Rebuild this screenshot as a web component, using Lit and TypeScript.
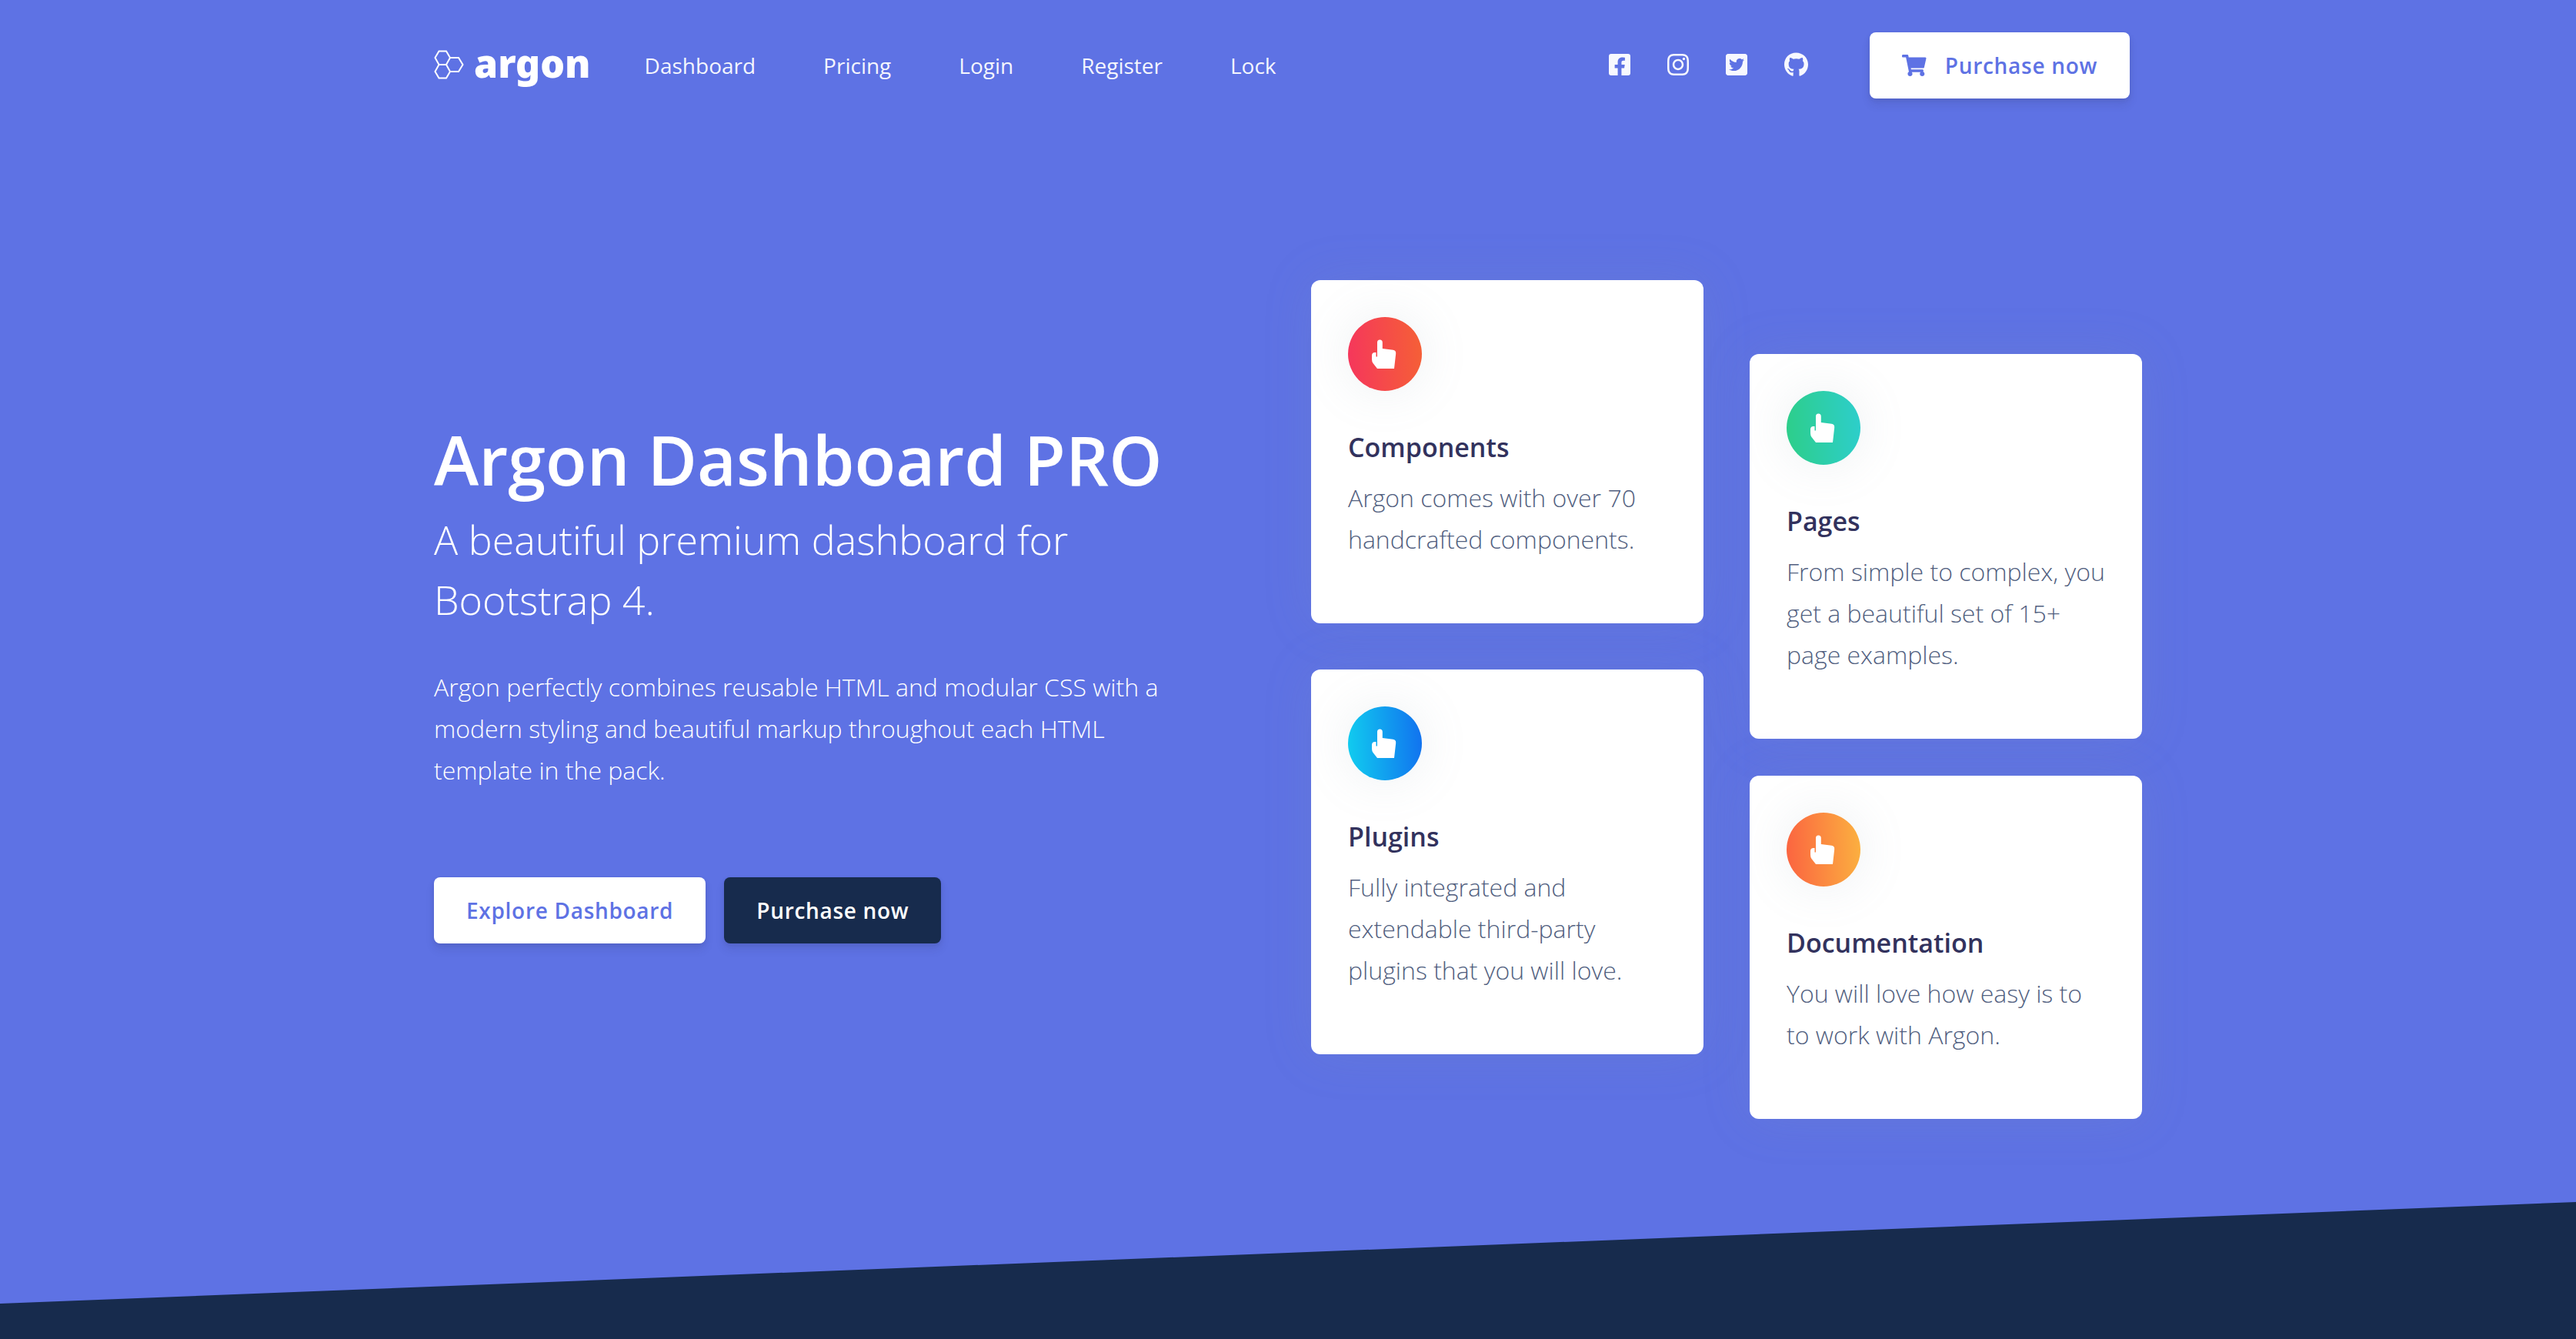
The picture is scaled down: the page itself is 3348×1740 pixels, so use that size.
import { LitElement, html, css, svg } from "lit";
import { customElement, property } from "lit/decorators.js";

const facebook = svg`<path d="M400 32H48A48 48 0 0 0 0 80v352a48 48 0 0 0 48 48h137.25V327.69h-63V256h63v-54.64c0-62.15 37-96.48 93.67-96.48 27.14 0 55.52 4.84 55.52 4.84v61h-31.27c-30.81 0-40.42 19.12-40.42 38.73V256h68.78l-11 71.69h-57.78V480H400a48 48 0 0 0 48-48V80a48 48 0 0 0-48-48z"/>`;
const instagram = svg`<path d="M224.1 141c-63.6 0-114.9 51.3-114.9 114.9s51.3 114.9 114.9 114.9S339 319.5 339 255.900 287.700 141 224.100 141zm0 189.600c-41.100 0-74.700-33.500-74.700-74.700s33.500-74.700 74.700-74.700 74.700 33.500 74.700 74.700-33.600 74.700-74.700 74.700zm146.400-194.300c0 14.900-12 26.800-26.800 26.800-14.900 0-26.800-12-26.800-26.800s12-26.800 26.800-26.800 26.800 12 26.800 26.800zm76.100 27.200c-1.700-35.900-9.900-67.700-36.200-93.900-26.200-26.200-58-34.400-93.900-36.200-37-2.100-147.900-2.100-184.900 0-35.800 1.700-67.600 9.900-93.900 36.100s-34.400 58-36.200 93.900c-2.100 37-2.100 147.900 0 184.900 1.700 35.900 9.900 67.700 36.200 93.900s58 34.400 93.900 36.200c37 2.100 147.900 2.100 184.900 0 35.900-1.700 67.700-9.900 93.900-36.200 26.200-26.200 34.400-58 36.200-93.900 2.100-37 2.100-147.800 0-184.800zM398.800 388c-7.800 19.600-22.900 34.700-42.600 42.600-29.500 11.700-99.500 9-132.100 9s-102.700 2.600-132.100-9c-19.600-7.800-34.700-22.900-42.600-42.600-11.700-29.500-9-99.500-9-132.100s-2.600-102.700 9-132.100c7.800-19.600 22.900-34.700 42.600-42.600 29.500-11.700 99.500-9 132.100-9s102.700-2.600 132.100 9c19.600 7.800 34.700 22.900 42.600 42.600 11.700 29.500 9 99.500 9 132.100s2.700 102.700-9 132.100z"/>`;
const twitter = svg`<path d="M400 32H48C21.500 32 0 53.500 0 80v352c0 26.500 21.500 48 48 48h352c26.500 0 48-21.500 48-48V80c0-26.500-21.500-48-48-48zm-48.900 158.800c.2 2.800.2 5.700.2 8.500 0 86.700-66 186.600-186.600 186.600-37.200 0-71.700-10.800-100.700-29.400 5.300.6 10.400.8 15.800.8 30.700 0 58.900-10.400 81.400-28-28.800-.6-53-19.500-61.300-45.500 10.100 1.500 19.200 1.500 29.600-1.200-30-6.100-52.500-32.500-52.500-64.400v-.8c8.700 4.900 18.900 7.900 29.600 8.300a65.447 65.447 0 0 1-29.200-54.600c0-12.200 3.200-23.400 8.900-33.100 32.300 39.800 80.800 65.800 135.200 68.600-9.300-44.500 24-80.600 64-80.600 18.900 0 35.900 7.900 47.900 20.700 14.800-2.800 29-8.300 41.600-15.800-4.900 15.200-15.200 28-28.800 36.100 13.200-1.400 26-5.100 37.800-10.200-8.900 13.100-20.100 24.700-32.900 34z"/>`;
const github = svg`<path d="M165.900 397.400c0 2-2.300 3.600-5.200 3.600-3.300.3-5.600-1.300-5.600-3.600 0-2 2.300-3.600 5.200-3.600 3-.3 5.600 1.300 5.600 3.600zm-31.100-4.500c-.7 2 1.300 4.300 4.300 4.900 2.600 1 5.600 0 6.200-2s-1.300-4.300-4.300-5.200c-2.600-.7-5.500.3-6.200 2.300zm44.200-1.700c-2.900.7-4.900 2.600-4.600 4.900.3 2 2.900 3.300 5.900 2.600 2.900-.7 4.900-2.600 4.600-4.600-.3-1.900-3-3.200-5.900-2.900zM244.800 8C106.100 8 0 113.300 0 252c0 110.900 69.800 205.800 169.500 239.200 12.800 2.300 17.300-5.600 17.300-12.100 0-6.200-.3-40.400-.3-61.400 0 0-70 15-84.700-29.800 0 0-11.400-29.100-27.800-36.600 0 0-22.900-15.700 1.600-15.400 0 0 24.900 2 38.600 25.800 21.900 38.600 58.600 27.500 72.900 20.900 2.300-16 8.800-27.100 16-33.700-55.900-6.200-112.300-14.300-112.300-110.500 0-27.500 7.600-41.300 23.600-58.900-2.600-6.500-11.100-33.300 2.600-67.900 20.900-6.500 69 27 69 27 20-5.600 41.500-8.500 62.800-8.500s42.800 2.900 62.800 8.500c0 0 48.100-33.600 69-27 13.700 34.700 5.200 61.400 2.600 67.900 16 17.700 25.800 31.500 25.800 58.900 0 96.500-58.900 104.200-114.800 110.500 9.200 7.900 17 22.900 17 46.400 0 33.700-.3 75.400-.3 83.600 0 6.500 4.600 14.400 17.300 12.100C428.200 457.800 496 362.900 496 252 496 113.300 383.500 8 244.800 8z"/>`;
const cart = svg`<path d="M528.12 301.319l47.273-208C578.806 78.301 567.391 64 551.990 64H159.208l-9.166-44.810C147.758 8.021 137.930 0 126.529 0H24C10.745 0 0 10.745 0 24v16c0 13.255 10.745 24 24 24h69.883l70.248 343.435C147.325 417.100 136 435.222 136 456c0 30.928 25.072 56 56 56s56-25.072 56-56c0-15.674-6.447-29.835-16.824-40h209.647C430.447 426.165 424 440.326 424 456c0 30.928 25.072 56 56 56s56-25.072 56-56c0-22.172-12.888-41.332-31.579-50.405l5.517-24.276c3.413-15.018-8.002-29.319-23.403-29.319H218.117l-6.545-32h293.145c11.206 0 20.920-7.754 23.403-18.681z"/>`;

const socials = [
  { label: "Facebook", box: "0 0 448 512", icon: facebook },
  { label: "Instagram", box: "0 0 448 512", icon: instagram },
  { label: "Twitter", box: "0 0 448 512", icon: twitter },
  { label: "GitHub", box: "0 0 496 512", icon: github },
];

@customElement("feature-card")
export class FeatureCard extends LitElement {
  @property() heading = "";
  @property() text = "";
  @property({ reflect: true }) tone = "red";

  static styles = css`
    :host {
      display: block;
      padding: 48px;
      border-radius: 12px;
      background: #fff;
      box-shadow: 0 0 64px rgba(136, 152, 170, 0.15);
      --from: #f5365c;
      --to: #f56036;
    }
    :host([tone="blue"]) { --from: #11cdef; --to: #1171ef; }
    :host([tone="green"]) { --from: #2dce89; --to: #2dcecc; }
    :host([tone="orange"]) { --from: #fb6340; --to: #fbb140; }
    .badge {
      display: grid;
      place-items: center;
      width: 96px;
      height: 96px;
      border-radius: 50%;
      background: linear-gradient(87deg, var(--from), var(--to));
      box-shadow: 0 0 64px rgba(136, 152, 170, 0.15);
    }
    .hand { width: 40px; height: 40px; fill: #fff; }
    .heading {
      margin: 48px 0 14px;
      font-size: 34px;
      line-height: 50px;
      font-weight: 600;
      color: #32325d;
    }
    .text {
      margin: 0 0 34px;
      font-size: 32px;
      line-height: 54px;
      font-weight: 300;
      color: #525f7f;
    }
  `;

  render() {
    return html`
      <div class="badge">
        <svg class="hand" viewBox="0 0 40 40" aria-hidden="true">
          <path d="M10 39 4.500 32Q3 30 3 27V22Q3 18 7 18H8.500V23.500H10V5Q10 1.500 13.400 1.500T16.800 5V13L30.500 14.800Q34.500 15.400 34.200 19.500L32 39Z" />
        </svg>
      </div>
      <h2 class="heading">${this.heading}</h2>
      <p class="text">${this.text}</p>
    `;
  }
}

@customElement("app-root")
export class AppRoot extends LitElement {
  static styles = css`
    :host {
      display: block;
      font-family: "Open Sans", sans-serif;
      color: #fff;
    }
    .page {
      display: flex;
      flex-direction: column;
      min-height: 100vh;
      background: #5e72e4;
    }
    .container {
      box-sizing: border-box;
      width: 100%;
      max-width: 2280px;
      margin: 0 auto;
      padding: 0 30px;
    }
    .navbar {
      display: flex;
      align-items: center;
      padding-top: 42px;
      padding-right: 46px;
    }
    a { color: inherit; text-decoration: none; }
    .brand {
      display: flex;
      align-items: center;
      gap: 12px;
      margin-right: 70px;
      padding-bottom: 2px;
    }
    .mark { width: 40px; height: 40px; fill: none; stroke: #fff; stroke-width: 2; }
    .word {
      padding-bottom: 4px;
      font-family: "Noto Sans", sans-serif;
      font-size: 50px;
      line-height: 60px;
      font-weight: 900;
    }
    .links {
      display: flex;
      gap: 88px;
      flex: 1;
      font-size: 28px;
      line-height: 42px;
      color: rgba(255, 255, 255, 0.95);
    }
    .social {
      display: flex;
      align-items: center;
      gap: 48px;
      margin-right: 80px;
      padding-bottom: 2px;
    }
    .social-link { display: flex; }
    .glyph { height: 32px; fill: rgba(255, 255, 255, 0.95); }
    .btn {
      display: inline-flex;
      align-items: center;
      gap: 24px;
      padding: 22px 42px;
      border-radius: 8px;
      font-size: 28px;
      line-height: 42px;
      font-weight: 600;
      letter-spacing: 0.025em;
      background: #fff;
      color: #5e72e4;
      box-shadow: 0 8px 12px rgba(50, 50, 93, 0.11), 0 2px 6px rgba(0, 0, 0, 0.08);
    }
    .btn-dark { background: #172b4d; color: #fff; }
    .cart { height: 28px; fill: #5e72e4; }
    .hero {
      display: grid;
      grid-template-columns: 1fr 1fr;
      align-items: center;
      column-gap: 60px;
      padding-top: 236px;
      padding-bottom: 108px;
    }
    .copy { padding-right: 120px; padding-bottom: 60px; }
    .title { margin: 0; font-size: 88px; line-height: 130px; font-weight: 600; white-space: nowrap; }
    .lead { margin: 0; font-size: 52px; line-height: 78px; font-weight: 300; }
    .body { margin: 48px 0 0; font-size: 32px; line-height: 54px; font-weight: 300; }
    .actions { display: flex; gap: 24px; margin-top: 112px; }
    .cards { display: grid; grid-template-columns: 1fr 1fr; gap: 60px; align-items: start; }
    .column { display: grid; gap: 60px; }
    .column-low { gap: 48px; padding-top: 96px; }
    .slant { display: block; width: 100%; height: 132px; fill: #172b4d; }
    .floor { flex: 1; background: #172b4d; }
  `;

  render() {
    return html`
      <div class="page">
        <header class="container navbar">
          <a class="brand" href="#" aria-label="argon">
            <svg class="mark" viewBox="0 0 40 40" aria-hidden="true">
              <path d="M6.500 2.500H16L21 11 16 20H6.500L1.500 11ZM6.500 20 1.500 29 6.500 37.500H16L21 29 16 20M21 11H32L37.500 20 32 29H21" />
            </svg>
            <span class="word">argon</span>
          </a>
          <nav class="links">
            ${["Dashboard", "Pricing", "Login", "Register", "Lock"].map((name) => html`<a href="#">${name}</a>`)}
          </nav>
          <div class="social">
            ${socials.map(
              (s) => html`<a class="social-link" href="#" aria-label=${s.label}>
                <svg class="glyph" viewBox=${s.box} aria-hidden="true">${s.icon}</svg>
              </a>`
            )}
          </div>
          <a class="btn" href="#">
            <svg class="cart" viewBox="0 0 576 512" aria-hidden="true">${cart}</svg>
            <span>Purchase now</span>
          </a>
        </header>
        <main class="container hero">
          <section class="copy">
            <h1 class="title">Argon Dashboard PRO</h1>
            <p class="lead">A beautiful premium dashboard for Bootstrap 4.</p>
            <p class="body">
              Argon perfectly combines reusable HTML and modular CSS with a modern styling and
              beautiful markup throughout each HTML template in the pack.
            </p>
            <div class="actions">
              <a class="btn" href="#">Explore Dashboard</a>
              <a class="btn btn-dark" href="#">Purchase now</a>
            </div>
          </section>
          <section class="cards">
            <div class="column">
              <feature-card tone="red" heading="Components" text="Argon comes with over 70 handcrafted components."></feature-card>
              <feature-card tone="blue" heading="Plugins" text="Fully integrated and extendable third-party plugins that you will love."></feature-card>
            </div>
            <div class="column column-low">
              <feature-card tone="green" heading="Pages" text="From simple to complex, you get a beautiful set of 15+ page examples."></feature-card>
              <feature-card tone="orange" heading="Documentation" text="You will love how easy is to to work with Argon."></feature-card>
            </div>
          </section>
        </main>
        <svg class="slant" viewBox="0 0 100 100" preserveAspectRatio="none" aria-hidden="true">
          <polygon points="100 0 100 100 0 100" />
        </svg>
        <div class="floor"></div>
      </div>
    `;
  }
}
